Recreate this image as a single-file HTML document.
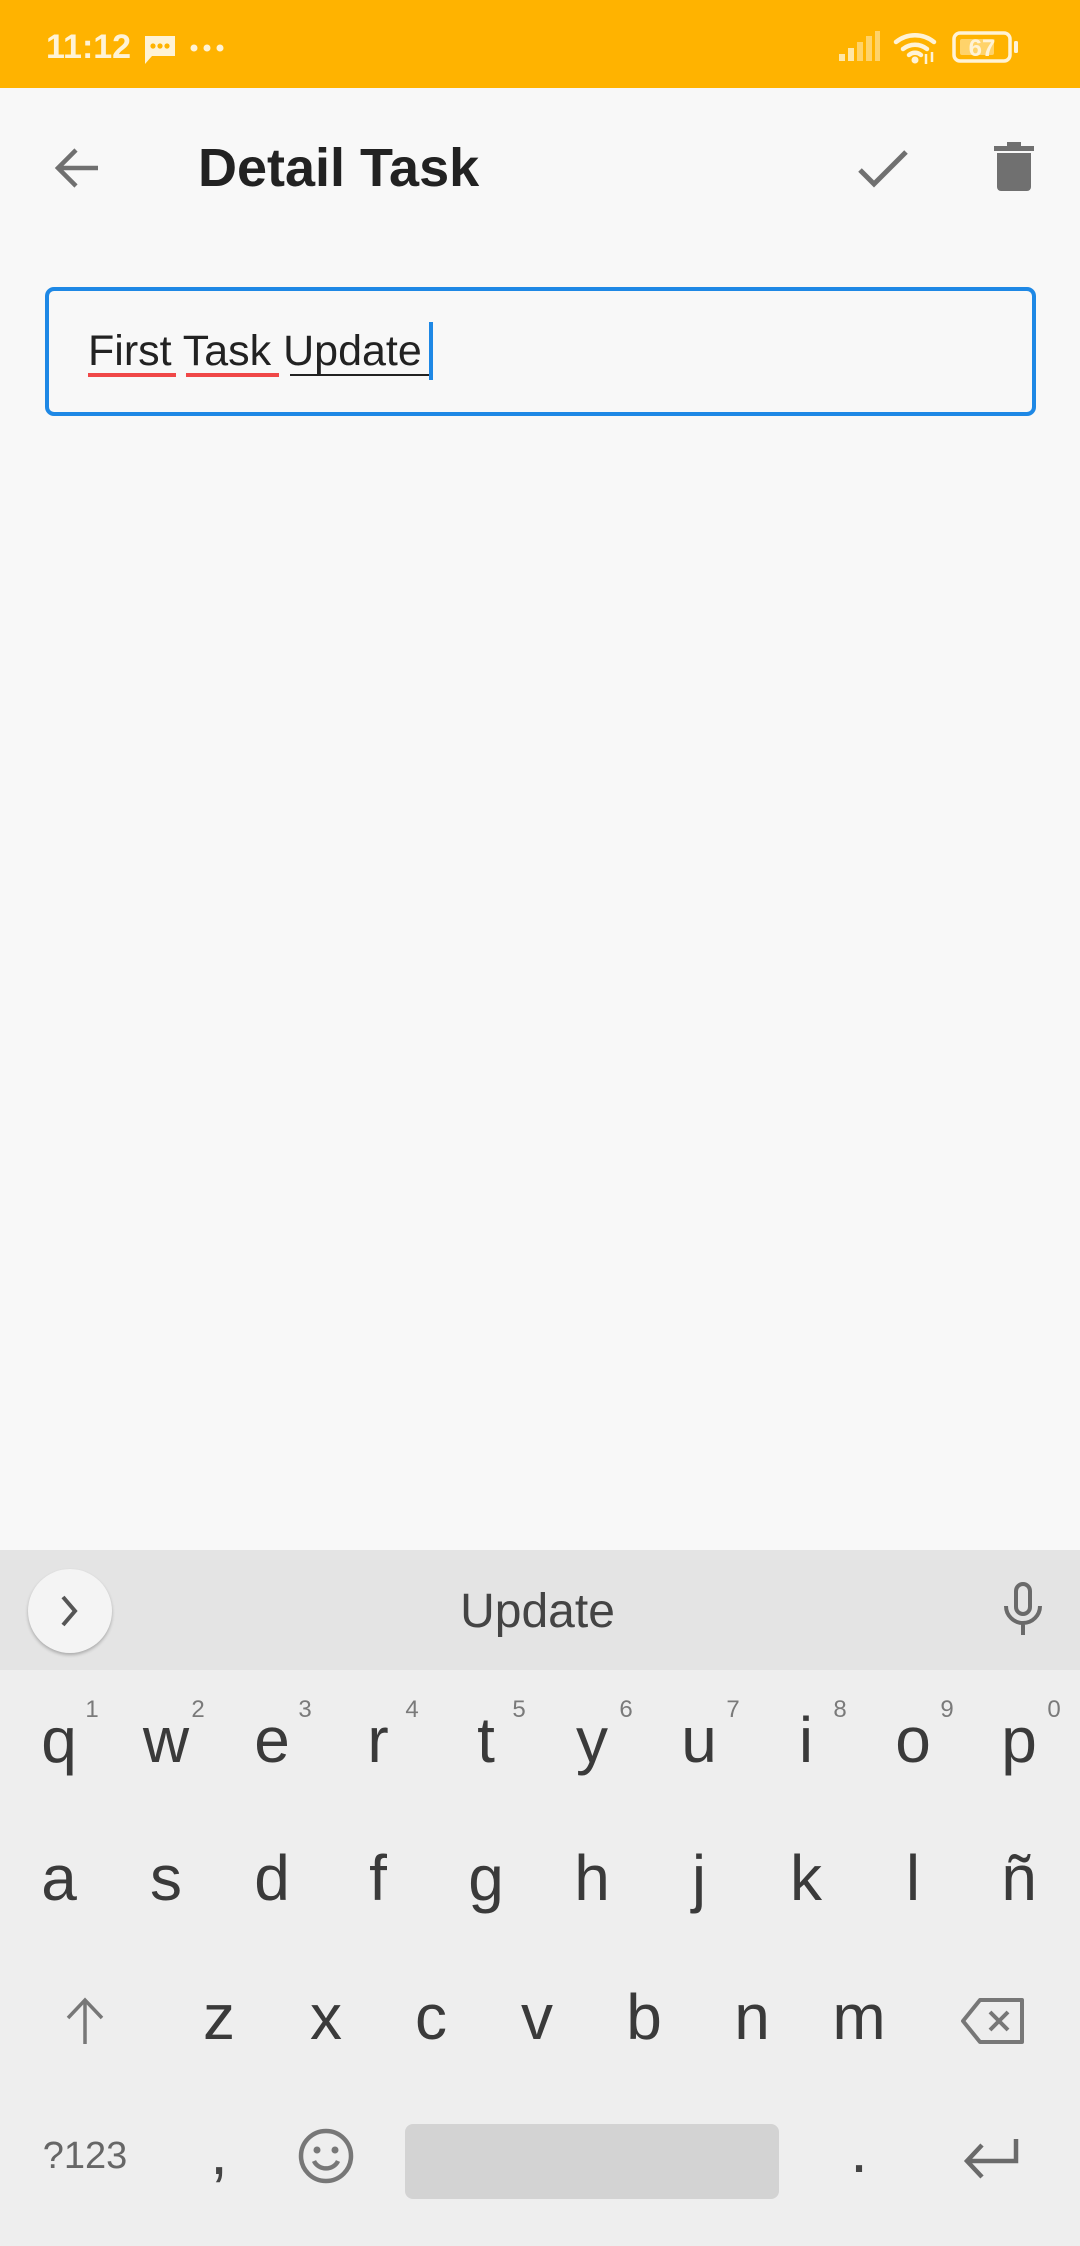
<!DOCTYPE html>
<html><head><meta charset="utf-8"><style>
*{margin:0;padding:0;box-sizing:border-box}
body{width:1080px;height:2246px;background:#F8F8F8;position:relative;overflow:hidden;font-family:"Liberation Sans",sans-serif}
.a{position:absolute}
.k{position:absolute;transform:translateX(-50%);font-size:64px;line-height:64px;color:#3a3a3a;white-space:nowrap}
.n{position:absolute;transform:translateX(-50%);font-size:24px;line-height:24px;color:#7a7a7a}
</style></head><body>
<div class="a" style="left:0;top:0;width:1080px;height:88px;background:#FFB300"></div>
<div class="a" style="left:46px;top:30px;font-size:34px;line-height:34px;font-weight:bold;color:#FFF3D6">11:12</div>
<svg class="a" style="left:142px;top:34px" width="36" height="32" viewBox="0 0 36 32"><path d="M2 2h31v20H10l-7 8V2z" fill="#FFF3D6"/><circle cx="11" cy="12" r="2.6" fill="#FFB300"/><circle cx="18" cy="12" r="2.6" fill="#FFB300"/><circle cx="25" cy="12" r="2.6" fill="#FFB300"/></svg>
<svg class="a" style="left:188px;top:40px" width="40" height="16"><circle cx="6" cy="8" r="3.5" fill="#FFF3D6"/><circle cx="19" cy="8" r="3.5" fill="#FFF3D6"/><circle cx="32" cy="8" r="3.5" fill="#FFF3D6"/></svg>
<svg class="a" style="left:838px;top:30px" width="45" height="34" viewBox="0 0 45 34"><g fill="#FFE7A8"><rect x="1" y="24" width="6" height="7"/><rect x="10" y="18" width="6" height="13"/></g><g fill="#FFD36A"><rect x="19" y="12" width="6" height="19"/><rect x="28" y="6" width="6" height="25"/><rect x="37" y="1" width="5" height="30"/></g></svg>
<svg class="a" style="left:893px;top:30px" width="48" height="36" viewBox="0 0 48 36"><g fill="none" stroke="#FFF3D6" stroke-width="4.5" stroke-linecap="round"><path d="M3 12a30 30 0 0 1 38 0"/><path d="M10 19a19 19 0 0 1 24 0"/><path d="M16 25a9 9 0 0 1 12 0"/></g><circle cx="22" cy="30" r="3.5" fill="#FFF3D6"/><path d="M33 24v10M39 22v10" stroke="#FFF3D6" stroke-width="2.5"/></svg>
<svg class="a" style="left:952px;top:31px" width="70" height="32" viewBox="0 0 70 32"><rect x="2" y="2" width="56" height="28" rx="6" fill="none" stroke="#FFF3D6" stroke-width="3.5"/><rect x="8" y="8" width="34" height="16" rx="2" fill="#FFD36A"/><rect x="62" y="10" width="4" height="12" rx="1.5" fill="#FFF3D6"/><text x="30" y="25" text-anchor="middle" font-family="Liberation Sans" font-size="24" font-weight="bold" fill="#FFF3D6">67</text></svg>

<svg class="a" style="left:52px;top:144px" width="50" height="48" viewBox="0 0 50 48"><path d="M46 24H6M24 6L6 24l18 18" fill="none" stroke="#707070" stroke-width="4.5"/></svg>
<div class="a" style="left:198px;top:138px;font-size:54px;line-height:60px;font-weight:bold;color:#222">Detail Task</div>
<svg class="a" style="left:856px;top:146px" width="54" height="42" viewBox="0 0 54 42"><path d="M4 24l14 14L50 6" fill="none" stroke="#707070" stroke-width="5"/></svg>
<svg class="a" style="left:992px;top:140px" width="44" height="52" viewBox="0 0 44 52"><path d="M2 6h40v5H2zM15 2h14v5H15z" fill="#707070"/><path d="M5 13h34v34a4 4 0 0 1-4 4H9a4 4 0 0 1-4-4z" fill="#707070"/></svg>

<div class="a" style="left:45px;top:287px;width:991px;height:129px;border:4.5px solid #1E88E5;border-radius:9px"></div>
<div class="a" style="left:88px;top:326px;font-size:43px;line-height:50px;color:#222;white-space:nowrap">First Task Update</div>
<div class="a" style="left:88px;top:373px;width:88px;height:4px;background:#F04848"></div>
<div class="a" style="left:186px;top:373px;width:93px;height:4px;background:#F04848"></div>
<div class="a" style="left:290px;top:374px;width:139px;height:2px;background:#222"></div>
<div class="a" style="left:429px;top:322px;width:4px;height:58px;background:#1E88E5"></div>

<div class="a" style="left:0;top:1550px;width:1080px;height:696px;background:#EEEEEE"></div>
<div class="a" style="left:0;top:1550px;width:1080px;height:120px;background:#E4E4E4"></div>
<div class="a" style="left:28px;top:1569px;width:84px;height:84px;border-radius:50%;background:#F4F4F4;box-shadow:0 2px 3px rgba(0,0,0,.25)"></div>
<svg class="a" style="left:58px;top:1594px" width="24" height="34" viewBox="0 0 24 34"><path d="M5 3l12 14L5 31" fill="none" stroke="#555" stroke-width="4"/></svg>
<div class="a" style="left:0;width:1075px;top:1584px;text-align:center;font-size:48px;line-height:56px;color:#444">Update</div>
<svg class="a" style="left:1000px;top:1580px" width="46" height="60" viewBox="0 0 46 60"><rect x="16" y="4" width="14" height="30" rx="7" fill="none" stroke="#6a6a6a" stroke-width="4"/><path d="M6 26a17 17 0 0 0 34 0M23 43v12" fill="none" stroke="#6a6a6a" stroke-width="4"/></svg>

<div class="k" style="left:59px;top:1708px">q</div><div class="n" style="left:92px;top:1698px">1</div>
<div class="k" style="left:166px;top:1708px">w</div><div class="n" style="left:198px;top:1698px">2</div>
<div class="k" style="left:272px;top:1708px">e</div><div class="n" style="left:305px;top:1698px">3</div>
<div class="k" style="left:378px;top:1708px">r</div><div class="n" style="left:412px;top:1698px">4</div>
<div class="k" style="left:486px;top:1708px">t</div><div class="n" style="left:519px;top:1698px">5</div>
<div class="k" style="left:592px;top:1708px">y</div><div class="n" style="left:626px;top:1698px">6</div>
<div class="k" style="left:699px;top:1708px">u</div><div class="n" style="left:733px;top:1698px">7</div>
<div class="k" style="left:806px;top:1708px">i</div><div class="n" style="left:840px;top:1698px">8</div>
<div class="k" style="left:913px;top:1708px">o</div><div class="n" style="left:947px;top:1698px">9</div>
<div class="k" style="left:1019px;top:1708px">p</div><div class="n" style="left:1054px;top:1698px">0</div>

<div class="k" style="left:59px;top:1846px">a</div>
<div class="k" style="left:166px;top:1846px">s</div>
<div class="k" style="left:272px;top:1846px">d</div>
<div class="k" style="left:378px;top:1846px">f</div>
<div class="k" style="left:486px;top:1846px">g</div>
<div class="k" style="left:592px;top:1846px">h</div>
<div class="k" style="left:699px;top:1846px">j</div>
<div class="k" style="left:806px;top:1846px">k</div>
<div class="k" style="left:913px;top:1846px">l</div>
<div class="k" style="left:1019px;top:1846px">ñ</div>

<svg class="a" style="left:62px;top:1996px" width="46" height="50" viewBox="0 0 46 50"><path d="M23 48V4M6 22L23 4l17 18" fill="none" stroke="#777" stroke-width="3.5"/></svg>
<div class="k" style="left:219px;top:1985px">z</div>
<div class="k" style="left:326px;top:1985px">x</div>
<div class="k" style="left:431px;top:1985px">c</div>
<div class="k" style="left:537px;top:1985px">v</div>
<div class="k" style="left:644px;top:1985px">b</div>
<div class="k" style="left:752px;top:1985px">n</div>
<div class="k" style="left:859px;top:1985px">m</div>
<svg class="a" style="left:960px;top:1997px" width="66" height="48" viewBox="0 0 66 48"><path d="M20 3h42v42H20L3 24z" fill="none" stroke="#777" stroke-width="4" stroke-linejoin="round"/><path d="M30 15l18 18M48 15L30 33" stroke="#777" stroke-width="4"/></svg>

<div class="k" style="left:85px;top:2131px;font-size:38px;line-height:50px;color:#666">?123</div>
<div class="k" style="left:219px;top:2120px;color:#444">,</div>
<svg class="a" style="left:297px;top:2127px" width="58" height="58" viewBox="0 0 58 58"><circle cx="29" cy="29" r="25" fill="none" stroke="#777" stroke-width="4.5"/><circle cx="20" cy="23" r="3.5" fill="#777"/><circle cx="38" cy="23" r="3.5" fill="#777"/><path d="M17 34a13 12 0 0 0 24 0" fill="none" stroke="#777" stroke-width="4.5"/></svg>
<div class="a" style="left:405px;top:2124px;width:374px;height:75px;background:#D3D3D3;border-radius:8px"></div>
<div class="k" style="left:859px;top:2118px;color:#444">.</div>
<svg class="a" style="left:962px;top:2135px" width="62" height="46" viewBox="0 0 62 46"><path d="M54 4v22H6M20 10L5 26l15 16" fill="none" stroke="#6a6a6a" stroke-width="4.5"/></svg>
</body></html>
